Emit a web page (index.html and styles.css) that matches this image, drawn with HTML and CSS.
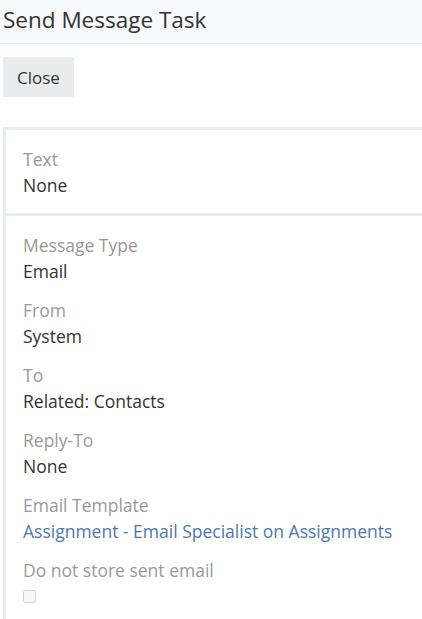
FILE: index.html
```html
<!DOCTYPE html>
<html lang="en">
<head>
    <meta http-equiv="Content-Type" content="text/html; charset=UTF-8">
    <meta name="viewport" content="width=device-width, initial-scale=1.0">
    <title>Send Message Task</title>
    <link rel="stylesheet" href="styles.css">
</head>
<body>
    <div class="header">
        <h1>Send Message Task</h1>
    </div>
    <div class="content">
        <div class="buttons">
            <button class="btn">Close</button>
        </div>
        <div class="panel">
            <div class="panel-body">
                <div class="field">
                    <label>Text</label>
                    <div class="value">None</div>
                </div>
            </div>
            <div class="panel-body">
                <div class="field">
                    <label>Message Type</label>
                    <div class="value">Email</div>
                </div>
                <div class="field">
                    <label>From</label>
                    <div class="value">System</div>
                </div>
                <div class="field">
                    <label>To</label>
                    <div class="value">Related: Contacts</div>
                </div>
                <div class="field field-gap">
                    <label>Reply-To</label>
                    <div class="value">None</div>
                </div>
                <div class="field">
                    <label>Email Template</label>
                    <div class="value"><a href="#">Assignment - Email Specialist on Assignments</a></div>
                </div>
                <div class="field">
                    <label>Do not store sent email</label>
                    <div class="value"><input type="checkbox" disabled></div>
                </div>
            </div>
        </div>
    </div>
</body>
</html>
```

FILE: styles.css
```css
body {
    font-family: "Open Sans", Arial, sans-serif;
    font-size: 17.5px;
    color: #333;
    background-color: #fff;
    margin: 0;
}

.header {
    background-color: #f8f9fb;
    border-bottom: 1px solid #e2e4e5;
    height: 43px;
    padding: 0 3px;
}

h1 {
    margin: 0;
    font-size: 22.5px;
    font-weight: normal;
    line-height: 40px;
    color: #333;
}

.content {
    padding: 13px 0 0 3px;
}

.btn {
    font-family: inherit;
    font-size: 17px;
    color: #333;
    background-color: #e8eced;
    border: none;
    border-radius: 0;
    height: 40px;
    padding: 0 14px;
    cursor: pointer;
}

.panel {
    margin-top: 30px;
    border-left: 3px solid #e8eced;
    border-top: 3px solid #e8eced;
}

.panel-body {
    padding: 16px 17px 15px 17px;
}

.panel-body + .panel-body {
    border-top: 3px solid #e8eced;
}

.field {
    line-height: 26px;
    margin-bottom: 13px;
}

.field:last-child {
    margin-bottom: 0;
}

.field-gap {
    margin-top: 3px;
}

label {
    display: block;
    color: #999;
}

.value a {
    color: #4a78b0;
    text-decoration: none;
}

input[type="checkbox"] {
    margin: 6px 0 0 0;
    width: 13px;
    height: 13px;
}
```
